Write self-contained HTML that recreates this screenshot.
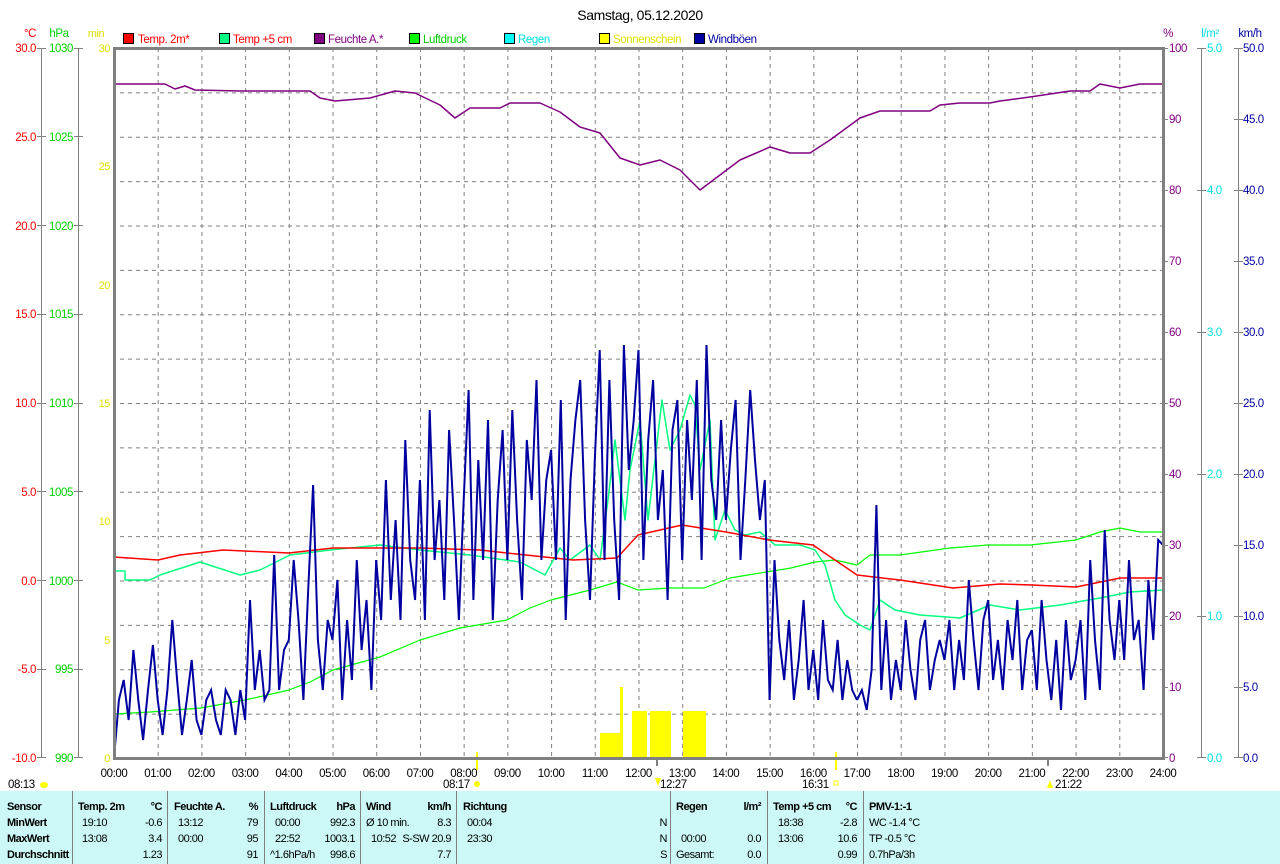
<!DOCTYPE html>
<html><head><meta charset="utf-8"><style>
html,body{margin:0;padding:0;background:#fff;width:1280px;height:864px;overflow:hidden}
svg{display:block;font-family:"Liberation Sans",sans-serif;letter-spacing:-0.4px}
</style></head><body>
<svg width="1280" height="864" xmlns="http://www.w3.org/2000/svg" font-size="11.5">
<defs>
<pattern id="pv" x="114" y="0" width="43.708" height="8" patternUnits="userSpaceOnUse"><line x1="0.5" y1="0" x2="0.5" y2="4" stroke="#808080"/></pattern>
<pattern id="ph" x="0" y="48" width="8" height="44.375" patternUnits="userSpaceOnUse"><line x1="0" y1="0.5" x2="4" y2="0.5" stroke="#808080"/></pattern>
</defs>
<text x="640" y="20" text-anchor="middle" font-size="14" fill="#000">Samstag, 05.12.2020</text>
<g>
<rect x="123.5" y="33.5" width="10" height="10" fill="#f00" stroke="#000"/><text x="138" y="43" fill="#f00">Temp. 2m*</text>
<rect x="219.5" y="33.5" width="10" height="10" fill="#00ff80" stroke="#000"/><text x="233" y="43" fill="#f00">Temp +5 cm</text>
<rect x="314.5" y="33.5" width="10" height="10" fill="#800080" stroke="#000"/><text x="328" y="43" fill="#800080">Feuchte A.*</text>
<rect x="409.5" y="33.5" width="10" height="10" fill="#00ff00" stroke="#000"/><text x="423" y="43" fill="#00d000">Luftdruck</text>
<rect x="504.5" y="33.5" width="10" height="10" fill="#00ffff" stroke="#000"/><text x="518" y="43" fill="#00e0e0">Regen</text>
<rect x="599.5" y="33.5" width="10" height="10" fill="#ffff00" stroke="#000"/><text x="613" y="43" fill="#e0e000">Sonnenschein</text>
<rect x="694.5" y="33.5" width="10" height="10" fill="#0000a0" stroke="#000"/><text x="708" y="43" fill="#0000a0">Windböen</text>
</g>
<text x="30" y="37" fill="#f00" text-anchor="middle">°C</text>
<text x="59" y="37" fill="#00d000" text-anchor="middle">hPa</text>
<text x="96" y="37" fill="#e0e000" text-anchor="middle" font-size="11">min</text>
<text x="1168" y="37" fill="#800080" text-anchor="middle">%</text>
<text x="1210" y="37" fill="#00e0e0" text-anchor="middle">l/m²</text>
<text x="1250" y="37" fill="#0000a0" text-anchor="middle">km/h</text>
<!-- axes lines -->
<g stroke="#808080">
<line x1="41.5" y1="48" x2="41.5" y2="758"/><line x1="78.5" y1="48" x2="78.5" y2="758"/>
<line x1="1201.5" y1="48" x2="1201.5" y2="758"/><line x1="1238.5" y1="48" x2="1238.5" y2="758"/>
<path d="M37 48.5h9M37 136.5h9M37 225.5h9M37 314.5h9M37 403.5h9M37 491.5h9M37 580.5h9M37 669.5h9M37 757.5h9M74 48.5h9M74 136.5h9M74 225.5h9M74 314.5h9M74 403.5h9M74 491.5h9M74 580.5h9M74 669.5h9M74 757.5h9"/>
<path d="M1163 48.5h5M1163 119.5h5M1163 190.5h5M1163 261.5h5M1163 332.5h5M1163 403.5h5M1163 474.5h5M1163 545.5h5M1163 616.5h5M1163 687.5h5M1163 757.5h5M1234 48.5h9M1234 119.5h9M1234 190.5h9M1234 261.5h9M1234 332.5h9M1234 403.5h9M1234 474.5h9M1234 545.5h9M1234 616.5h9M1234 687.5h9M1234 757.5h9M1197 48.5h9M1197 190.5h9M1197 332.5h9M1197 474.5h9M1197 616.5h9M1197 757.5h9"/>
</g>
<g fill="#f00" text-anchor="end">
<text x="36" y="52">30.0</text><text x="36" y="141">25.0</text><text x="36" y="230">20.0</text><text x="36" y="318">15.0</text><text x="36" y="407">10.0</text><text x="36" y="496">5.0</text><text x="36" y="585">0.0</text><text x="36" y="673">-5.0</text><text x="36" y="762">-10.0</text>
</g>
<g fill="#00d000" text-anchor="end">
<text x="73" y="52">1030</text><text x="73" y="141">1025</text><text x="73" y="230">1020</text><text x="73" y="318">1015</text><text x="73" y="407">1010</text><text x="73" y="496">1005</text><text x="73" y="585">1000</text><text x="73" y="673">995</text><text x="73" y="762">990</text>
</g>
<g fill="#e0e000" text-anchor="end" font-size="11">
<text x="110" y="52">30</text><text x="110" y="170">25</text><text x="110" y="289">20</text><text x="110" y="407">15</text><text x="110" y="525">10</text><text x="110" y="644">5</text><text x="110" y="762">0</text>
</g>
<g fill="#800080">
<text x="1169" y="52">100</text><text x="1169" y="123">90</text><text x="1169" y="194">80</text><text x="1169" y="265">70</text><text x="1169" y="336">60</text><text x="1169" y="407">50</text><text x="1169" y="478">40</text><text x="1169" y="549">30</text><text x="1169" y="620">20</text><text x="1169" y="691">10</text><text x="1169" y="762">0</text>
</g>
<g fill="#00e0e0">
<text x="1207" y="52">5.0</text><text x="1207" y="194">4.0</text><text x="1207" y="336">3.0</text><text x="1207" y="478">2.0</text><text x="1207" y="620">1.0</text><text x="1207" y="762">0.0</text>
</g>
<g fill="#0000a0">
<text x="1243" y="52">50.0</text><text x="1243" y="123">45.0</text><text x="1243" y="194">40.0</text><text x="1243" y="265">35.0</text><text x="1243" y="336">30.0</text><text x="1243" y="407">25.0</text><text x="1243" y="478">20.0</text><text x="1243" y="549">15.0</text><text x="1243" y="620">10.0</text><text x="1243" y="691">5.0</text><text x="1243" y="762">0.0</text>
</g>
<!-- grid -->
<rect x="115" y="48" width="1047" height="710" fill="url(#pv)"/>
<rect x="114" y="49" width="1049" height="708" fill="url(#ph)"/>
<!-- sunshine -->
<g fill="#ffff00">
<rect x="600" y="733" width="20" height="25"/>
<rect x="620" y="687" width="3" height="71"/>
<rect x="632" y="711" width="15" height="47"/>
<rect x="650" y="711" width="21" height="47"/>
<rect x="683" y="711" width="23" height="47"/>
<rect x="476" y="752" width="2" height="18"/>
<rect x="835" y="752" width="2" height="18"/>
</g>
<g fill="none" stroke-linejoin="round">
<polyline stroke="#800080" stroke-width="1.5" points="114,84 165,84 175,89 185,86 195,90 240,91 310,91 320,98 335,101 370,98 395,91 415,93 440,105 455,118 470,108 500,108 510,103 540,103 560,112 580,127 600,133 620,158 640,165 660,160 680,170 700,190 720,175 740,160 770,147 790,153 810,153 830,140 860,118 880,111 930,111 940,105 960,103 990,103 1000,101 1030,97 1070,91 1090,91 1100,84 1120,88 1140,84 1163,84"/>
<polyline stroke="#00ff00" stroke-width="1.2" points="114,714 150,712 201,708 245,700 289,690 310,682 333,670 380,657 420,640 460,628 507,620 530,608 551,600 590,590 617,582 638,590 670,588 704,588 730,578 748,575 791,568 815,562 835,560 857,565 870,555 900,555 950,548 988,545 1030,545 1076,540 1100,532 1120,528 1140,532 1163,532"/>
<polyline stroke="#00ff80" stroke-width="1.5" points="114,571 125,571 125,580 150,580 160,575 200,562 240,575 260,570 290,555 330,550 380,545 420,550 470,555 520,562 545,575 560,548 570,560 590,545 600,560 608,500 615,440 625,520 630,470 640,420 648,520 655,460 662,400 670,450 680,430 690,395 695,405 700,470 710,420 715,540 725,510 735,530 745,535 760,532 775,545 800,545 815,550 825,565 835,600 845,615 860,625 870,630 880,600 895,610 920,615 960,618 990,605 1020,610 1060,605 1100,598 1130,592 1163,590"/>
<polyline stroke="#ff0000" stroke-width="1.5" points="114,557 158,560 180,555 223,550 289,553 333,548 420,548 480,550 507,553 573,560 617,558 638,535 660,530 682,525 726,532 769,540 813,545 857,575 900,580 953,588 1000,584 1032,585 1076,587 1120,578 1163,578"/>
</g>
<g fill="none" stroke="#0000a0" stroke-width="2">
<polyline transform="translate(114,0)" points="0,758 4.9,700 9.7,680 14.6,720 19.4,650 24.3,700 29.1,740 34,690 38.9,645 43.7,700"/>
<polyline transform="translate(157.7,0)" points="0,700 4.9,735 9.7,690 14.6,620 19.4,680 24.3,735 29.1,700 34,660 38.9,720 43.7,735"/>
<polyline transform="translate(201.4,0)" points="0,735 4.9,700 9.7,690 14.6,720 19.4,735 24.3,690 29.1,700 34,735 38.9,690 43.7,720"/>
<polyline transform="translate(245.1,0)" points="0,720 4.9,600 9.7,690 14.6,650 19.4,700 24.3,690 29.1,555 34,690 38.9,650 43.7,640"/>
<polyline transform="translate(288.8,0)" points="0,640 4.9,560 9.7,620 14.6,700 19.4,590 24.3,485 29.1,640 34,690 38.9,620 43.7,640"/>
<polyline transform="translate(332.5,0)" points="0,640 4.9,580 9.7,700 14.6,620 19.4,680 24.3,560 29.1,650 34,600 38.9,690 43.7,560"/>
<polyline transform="translate(376.2,0)" points="0,560 4.9,620 9.7,480 14.6,600 19.4,520 24.3,620 29.1,440 34,560 38.9,600 43.7,480"/>
<polyline transform="translate(420,0)" points="0,480 4.9,620 9.7,410 14.6,560 19.4,500 24.3,600 29.1,430 34,520 38.9,620 43.7,500"/>
<polyline transform="translate(463.7,0)" points="0,500 4.9,390 9.7,600 14.6,460 19.4,560 24.3,420 29.1,620 34,500 38.9,430 43.7,560"/>
<polyline transform="translate(507.4,0)" points="0,560 4.9,410 9.7,520 14.6,600 19.4,440 24.3,500 29.1,380 34,560 38.9,480 43.7,450"/>
<polyline transform="translate(551.1,0)" points="0,450 4.9,560 9.7,400 14.6,620 19.4,480 24.3,420 29.1,380 34,520 38.9,600 43.7,460"/>
<polyline transform="translate(594.8,0)" points="0,460 4.9,350 9.7,560 14.6,380 19.4,520 24.3,600 29.1,345 34,470 38.9,420 43.7,350"/>
<polyline transform="translate(638.5,0)" points="0,350 4.9,560 9.7,440 14.6,380 19.4,520 24.3,470 29.1,600 34,430 38.9,400 43.7,560"/>
<polyline transform="translate(682.2,0)" points="0,560 4.9,420 9.7,500 14.6,380 19.4,560 24.3,345 29.1,480 34,520 38.9,420 43.7,520"/>
<polyline transform="translate(725.9,0)" points="0,520 4.9,450 9.7,400 14.6,560 19.4,480 24.3,390 29.1,460 34,520 38.9,480 43.7,700"/>
<polyline transform="translate(769.6,0)" points="0,700 4.9,560 9.7,640 14.6,680 19.4,620 24.3,700 29.1,660 34,600 38.9,690 43.7,650"/>
<polyline transform="translate(813.3,0)" points="0,650 4.9,700 9.7,620 14.6,680 19.4,690 24.3,640 29.1,700 34,660 38.9,690 43.7,700"/>
<polyline transform="translate(857,0)" points="0,700 4.9,690 9.7,710 14.6,670 19.4,505 24.3,690 29.1,620 34,700 38.9,660 43.7,690"/>
<polyline transform="translate(900.8,0)" points="0,690 4.9,620 9.7,670 14.6,700 19.4,640 24.3,620 29.1,690 34,660 38.9,640 43.7,660"/>
<polyline transform="translate(944.5,0)" points="0,660 4.9,620 9.7,690 14.6,640 19.4,680 24.3,580 29.1,640 34,690 38.9,620 43.7,600"/>
<polyline transform="translate(988.2,0)" points="0,600 4.9,680 9.7,640 14.6,690 19.4,620 24.3,660 29.1,600 34,690 38.9,640 43.7,630"/>
<polyline transform="translate(1031.9,0)" points="0,630 4.9,690 9.7,600 14.6,660 19.4,700 24.3,640 29.1,710 34,620 38.9,680 43.7,660"/>
<polyline transform="translate(1075.6,0)" points="0,660 4.9,620 9.7,700 14.6,560 19.4,640 24.3,690 29.1,530 34,620 38.9,660 43.7,600"/>
<polyline transform="translate(1119.3,0)" points="0,600 4.9,660 9.7,560 14.6,640 19.4,620 24.3,690 29.1,580 34,640 38.9,540 43.7,545"/>
</g>
<rect x="114.5" y="48.5" width="1049" height="710" fill="none" stroke="#808080" stroke-width="3"/>
<g fill="#000" text-anchor="middle">
<text x="114" y="777">00:00</text><text x="157.7" y="777">01:00</text><text x="201.4" y="777">02:00</text><text x="245.1" y="777">03:00</text><text x="288.8" y="777">04:00</text><text x="332.5" y="777">05:00</text><text x="376.2" y="777">06:00</text><text x="420" y="777">07:00</text><text x="463.7" y="777">08:00</text><text x="507.4" y="777">09:00</text><text x="551.1" y="777">10:00</text><text x="594.8" y="777">11:00</text><text x="638.5" y="777">12:00</text><text x="682.2" y="777">13:00</text><text x="725.9" y="777">14:00</text><text x="769.6" y="777">15:00</text><text x="813.3" y="777">16:00</text><text x="857" y="777">17:00</text><text x="900.8" y="777">18:00</text><text x="944.5" y="777">19:00</text><text x="988.2" y="777">20:00</text><text x="1031.9" y="777">21:00</text><text x="1075.6" y="777">22:00</text><text x="1119.3" y="777">23:00</text><text x="1163" y="777">24:00</text>
</g>
<rect x="656" y="758" width="2" height="8" fill="#808080"/><rect x="1047" y="758" width="2" height="8" fill="#808080"/>
<text x="8" y="788" fill="#000">08:13</text><ellipse cx="44" cy="785" rx="4" ry="3" fill="#ff0"/>
<text x="443" y="788" fill="#000">08:17</text><circle cx="477" cy="784" r="3" fill="#ff0"/>
<text x="660" y="788" fill="#000">12:27</text><path d="M655 778 l3 8 l3-8z" fill="#ff0"/>
<text x="802" y="788" fill="#000">16:31</text><rect x="834" y="781" width="4" height="4" fill="none" stroke="#ff0"/>
<text x="1055" y="788" fill="#000">21:22</text><path d="M1047 788 l3-8 l3 8z" fill="#ff0"/>
<rect x="0" y="791" width="1280" height="73" fill="#ccf9f7"/>
<g stroke="#808080" stroke-width="1">
<line x1="72.5" y1="791" x2="72.5" y2="864"/><line x1="167.5" y1="791" x2="167.5" y2="864"/>
<line x1="264.5" y1="791" x2="264.5" y2="864"/><line x1="360.5" y1="791" x2="360.5" y2="864"/>
<line x1="456.5" y1="791" x2="456.5" y2="864"/><line x1="670.5" y1="791" x2="670.5" y2="864"/>
<line x1="767.5" y1="791" x2="767.5" y2="864"/><line x1="863.5" y1="791" x2="863.5" y2="864"/>
</g>
<g font-size="11" fill="#000" letter-spacing="-0.5">
<g font-weight="bold"><text x="7" y="810">Sensor</text><text x="7" y="826">MinWert</text><text x="7" y="842">MaxWert</text><text x="7" y="858">Durchschnitt</text>
<text x="78" y="810">Temp. 2m</text><text x="162" y="810" text-anchor="end">°C</text>
<text x="174" y="810">Feuchte A.</text><text x="258" y="810" text-anchor="end">%</text>
<text x="270" y="810">Luftdruck</text><text x="355" y="810" text-anchor="end">hPa</text>
<text x="366" y="810">Wind</text><text x="451" y="810" text-anchor="end">km/h</text>
<text x="463" y="810">Richtung</text>
<text x="676" y="810">Regen</text><text x="761" y="810" text-anchor="end">l/m²</text>
<text x="773" y="810">Temp +5 cm</text><text x="857" y="810" text-anchor="end">°C</text>
<text x="869" y="810">PMV-1:-1</text></g>
<text x="82" y="826">19:10</text><text x="162" y="826" text-anchor="end">-0.6</text>
<text x="82" y="842">13:08</text><text x="162" y="842" text-anchor="end">3.4</text>
<text x="162" y="858" text-anchor="end">1.23</text>
<text x="178" y="826">13:12</text><text x="258" y="826" text-anchor="end">79</text>
<text x="178" y="842">00:00</text><text x="258" y="842" text-anchor="end">95</text>
<text x="258" y="858" text-anchor="end">91</text>
<text x="275" y="826">00:00</text><text x="355" y="826" text-anchor="end">992.3</text>
<text x="275" y="842">22:52</text><text x="355" y="842" text-anchor="end">1003.1</text>
<text x="270" y="858">^1.6hPa/h</text><text x="355" y="858" text-anchor="end">998.6</text>
<text x="366" y="826">Ø 10 min.</text><text x="451" y="826" text-anchor="end">8.3</text>
<text x="371" y="842">10:52</text><text x="451" y="842" text-anchor="end">S-SW 20.9</text>
<text x="451" y="858" text-anchor="end">7.7</text>
<text x="467" y="826">00:04</text><text x="467" y="842">23:30</text>
<text x="667" y="826" text-anchor="end">N</text><text x="667" y="842" text-anchor="end">N</text><text x="667" y="858" text-anchor="end">S</text>
<text x="681" y="842">00:00</text><text x="761" y="842" text-anchor="end">0.0</text>
<text x="676" y="858">Gesamt:</text><text x="761" y="858" text-anchor="end">0.0</text>
<text x="778" y="826">18:38</text><text x="857" y="826" text-anchor="end">-2.8</text>
<text x="778" y="842">13:06</text><text x="857" y="842" text-anchor="end">10.6</text>
<text x="857" y="858" text-anchor="end">0.99</text>
<text x="869" y="826">WC -1.4 °C</text><text x="869" y="842">TP -0.5 °C</text><text x="869" y="858">0.7hPa/3h</text>
</g>
</svg>
</body></html>
